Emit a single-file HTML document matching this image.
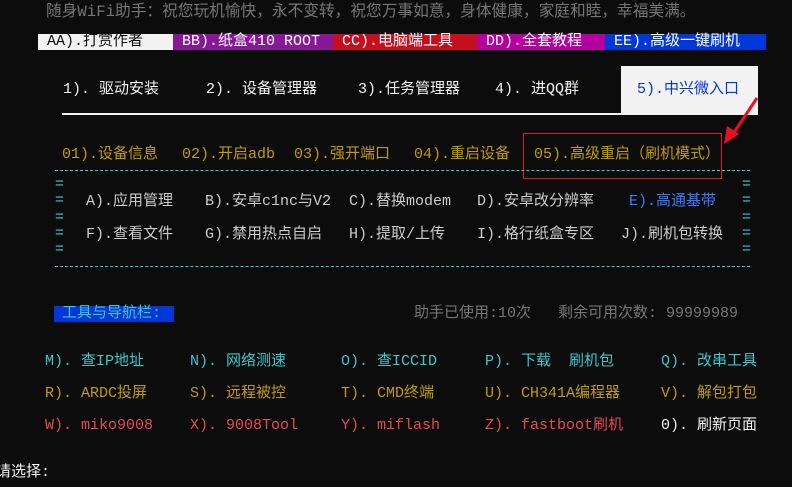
<!DOCTYPE html>
<html><head><meta charset="utf-8"><style>
html,body{margin:0;padding:0;background:#0c0c0c;width:792px;height:487px;overflow:hidden}
body{position:relative;font-family:"Liberation Mono","Noto Sans CJK SC",monospace;font-size:15px}
.t{position:absolute;white-space:pre;line-height:16px;transform:translateY(-8px)}
.b{position:absolute;top:34px;height:16px;line-height:16px;font-size:15px;white-space:pre;color:#fff}
.o{color:#c19c00}.c{color:#3ac8c8}.w{color:#ccc}.r{color:#e74856}.g{color:#767676}
.dash{position:absolute;left:55px;width:695px;height:0;border-top:1px dashed #3ac8c8}
</style></head><body>
<div class="t g" style="left:46px;top:12px;font-size:15.7px">随身WiFi助手：祝您玩机愉快，永不变转，祝您万事如意，身体健康，家庭和睦，幸福美满。</div>
<div class="b" style="left:38px;width:135px;background:#f2f2f2;color:#0c0c0c"> AA).打赏作者</div>
<div class="b" style="left:173px;width:160px;background:#881798"> BB).纸盒410 ROOT</div>
<div class="b" style="left:333px;width:144px;background:#c50f1f"> CC).电脑端工具</div>
<div class="b" style="left:477px;width:128px;background:#b4009e"> DD).全套教程</div>
<div class="b" style="left:605px;width:161px;background:#0037da"> EE).高级一键刷机</div>
<div style="position:absolute;left:621px;top:66px;width:137px;height:47px;background:#f2f2f2"></div>
<div style="position:absolute;left:62px;top:113px;width:696px;height:2px;background:#f2f2f2"></div>
<div class="t" style="left:63px;top:90px;color:#f2f2f2">1). 驱动安装</div>
<div class="t" style="left:206px;top:90px;color:#f2f2f2">2). 设备管理器</div>
<div class="t" style="left:358px;top:90px;color:#f2f2f2">3).任务管理器</div>
<div class="t" style="left:495px;top:90px;color:#f2f2f2">4). 进QQ群</div>
<div class="t" style="left:637px;top:90px;color:#0037da">5).中兴微入口</div>
<svg style="position:absolute;left:0;top:0" width="792" height="487"><line x1="757" y1="98" x2="733" y2="134" stroke="#e81123" stroke-width="3"/><polygon points="724,144 727,126 739,134" fill="#e81123"/></svg>
<div style="position:absolute;left:523px;top:133px;width:197px;height:44px;border:1px solid #e81123"></div>
<div class="t o" style="left:62px;top:155px">01).设备信息</div>
<div class="t o" style="left:182px;top:155px">02).开启adb</div>
<div class="t o" style="left:294px;top:155px">03).强开端口</div>
<div class="t o" style="left:414px;top:155px">04).重启设备</div>
<div class="t o" style="left:534px;top:155px">05).高级重启（刷机模式）</div>
<div class="dash" style="top:170px"></div>
<div class="dash" style="top:266px"></div>
<div class="t c" style="left:55px;top:185px;line-height:16.3px">=<br>=<br>=<br>=<br>=</div>
<div class="t c" style="left:742px;top:185px;line-height:16.3px">=<br>=<br>=<br>=<br>=</div>
<div class="t w" style="left:86px;top:202px">A).应用管理</div>
<div class="t w" style="left:205px;top:202px">B).安卓c1nc与V2</div>
<div class="t w" style="left:349px;top:202px">C).替换modem</div>
<div class="t w" style="left:477px;top:202px">D).安卓改分辨率</div>
<div class="t" style="left:629px;top:202px;color:#3b78ff">E).高通基带</div>
<div class="t w" style="left:86px;top:235px">F).查看文件</div>
<div class="t w" style="left:205px;top:235px">G).禁用热点自启</div>
<div class="t w" style="left:349px;top:235px">H).提取/上传</div>
<div class="t w" style="left:477px;top:235px">I).格行纸盒专区</div>
<div class="t w" style="left:621px;top:235px">J).刷机包转换</div>
<div style="position:absolute;left:54px;top:306px;width:120px;height:16px;background:#0037da"></div>
<div class="t c" style="left:62px;top:314px">工具与导航栏:</div>
<div class="t g" style="left:414px;top:314px">助手已使用:10次</div>
<div class="t g" style="left:558px;top:314px">剩余可用次数: 99999989</div>
<div class="t c" style="left:45px;top:362px">M). 查IP地址</div>
<div class="t c" style="left:190px;top:362px">N). 网络测速</div>
<div class="t c" style="left:341px;top:362px">O). 查ICCID</div>
<div class="t c" style="left:485px;top:362px">P). 下载  刷机包</div>
<div class="t c" style="left:661px;top:362px">Q). 改串工具</div>
<div class="t o" style="left:45px;top:394px">R). ARDC投屏</div>
<div class="t o" style="left:190px;top:394px">S). 远程被控</div>
<div class="t o" style="left:341px;top:394px">T). CMD终端</div>
<div class="t o" style="left:485px;top:394px">U). CH341A编程器</div>
<div class="t o" style="left:661px;top:394px">V). 解包打包</div>
<div class="t r" style="left:45px;top:426px">W). miko9008</div>
<div class="t r" style="left:190px;top:426px">X). 9008Tool</div>
<div class="t r" style="left:341px;top:426px">Y). miflash</div>
<div class="t r" style="left:485px;top:426px">Z). fastboot刷机</div>
<div class="t" style="left:661px;top:426px;color:#f2f2f2">0). 刷新页面</div>
<div class="t" style="left:-4px;top:473px;color:#f2f2f2">请选择:</div>
</body></html>
